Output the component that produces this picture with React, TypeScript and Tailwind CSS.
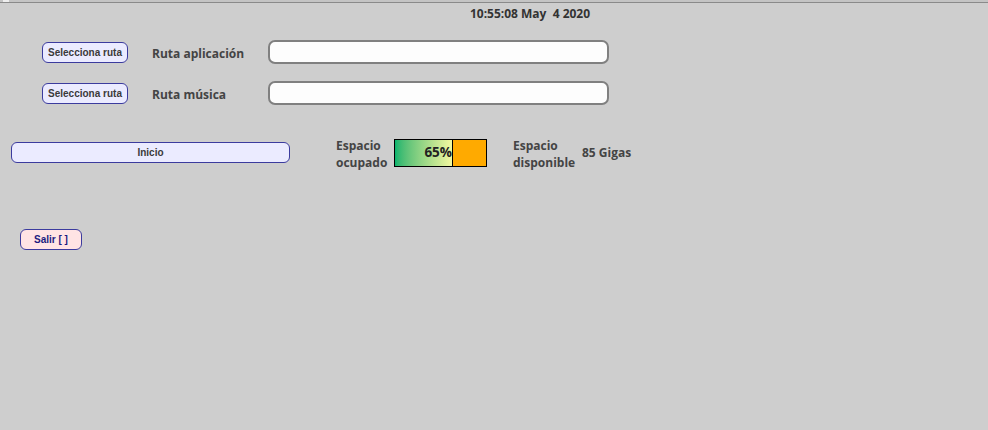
const Boton = ({
  label,
  className,
}: {
  label: string;
  className: string;
}) => (
  <button
    className={
      "h-[21px] rounded-[6px] border border-[#3b3b9e] text-[10px] font-bold font-['Liberation_Sans',Arial,sans-serif] " +
      className
    }
  >
    {label}
  </button>
);

const FilaRuta = ({ label }: { label: string }) => (
  <div className="flex items-center h-[24px]">
    <div className="w-[42px]" />
    <Boton
      label="Selecciona ruta"
      className="w-[86px] bg-[#ebebff] text-[#3a3a3a]"
    />
    <div className="w-[140px] pl-[24px] pt-[3px] text-[12px] font-bold text-[#444]">
      {label}
    </div>
    <input
      type="text"
      className="w-[341px] h-[24px] rounded-[7px] border-2 border-[#808080] bg-[#fdfdfd] outline-none"
    />
  </div>
);

export default function App() {
  return (
    <div className="w-[988px] h-[430px] bg-[#cecece] font-['Open_Sans',sans-serif] overflow-hidden">
      <div className="h-[3px] bg-[#c4c4c4] border-b border-[#8a8a8a] relative">
        <div className="absolute left-[3px] top-0 w-[6px] h-[2px] bg-[#eeeeee]" />
      </div>
      <div className="h-[21px] flex items-center justify-center pl-[72px] pt-[1px]">
        <span className="text-[12px] font-bold text-[#333] whitespace-pre">
          10:55:08 May  4 2020
        </span>
      </div>
      <div className="flex flex-col gap-[17px] pt-[16px]">
        <FilaRuta label="Ruta aplicación" />
        <FilaRuta label="Ruta música" />
      </div>
      <div className="flex items-start mt-[34px] h-[28px]">
        <div className="w-[11px]" />
        <Boton
          label="Inicio"
          className="mt-[3px] w-[279px] bg-[#ebebff] text-[#3a3a3a]"
        />
        <div className="w-[46px]" />
        <div className="w-[58px] -mt-[2px] text-[12px] font-bold leading-[17px] text-[#444]">
          Espacio
          <br />
          ocupado
        </div>
        <div className="flex w-[93px] h-[28px] border border-black">
          <div className="w-[58px] h-full bg-gradient-to-r from-[#00b46e] to-[#f2f8a0] border-r border-black flex items-center justify-end">
            <span className="text-[13.5px] font-bold text-[#222] leading-none">65%</span>
          </div>
          <div className="flex-1 bg-[#ffaa00]" />
        </div>
        <div className="w-[26px]" />
        <div className="w-[69px] -mt-[2px] text-[12px] font-bold leading-[17px] text-[#444]">
          Espacio
          <br />
          disponible
        </div>
        <div className="self-center text-[12px] font-bold text-[#444]">85 Gigas</div>
      </div>
      <div className="flex mt-[62px]">
        <div className="w-[20px]" />
        <Boton
          label="Salir [ ]"
          className="w-[62px] h-[20px] bg-[#ffe4e4] text-[#1c1c80]"
        />
      </div>
    </div>
  );
}
